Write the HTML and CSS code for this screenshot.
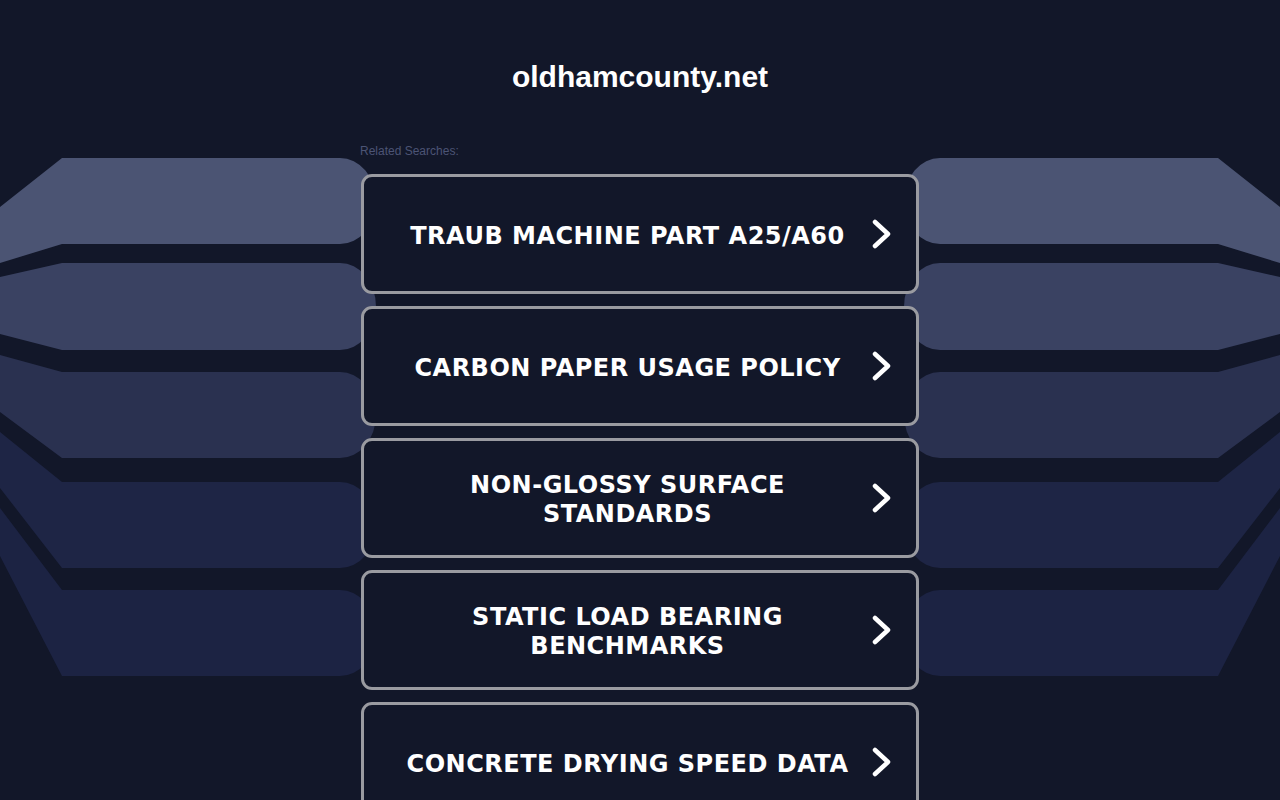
FILE: index.html
```html
<!DOCTYPE html>
<html lang="en">
<head>
<meta charset="utf-8">
<title>oldhamcounty.net</title>
<link rel="stylesheet" href="styles.css">
</head>
<body>
<svg class="backdrop" width="1280" height="800" viewBox="0 0 1280 800" aria-hidden="true">
  <g id="bands">
    <path fill="#4b5473" d="M0,207 L62,158 L340,158 A36,43 0 0 1 340,244 L62,244 L0,263 Z"/>
    <path fill="#3a4262" d="M0,277 L62,263 L340,263 A36,43.5 0 0 1 340,350 L62,350 L0,334 Z"/>
    <path fill="#2a3150" d="M0,355 L62,372 L340,372 A36,43 0 0 1 340,458 L62,458 L0,412 Z"/>
    <path fill="#1e2545" d="M0,432 L62,482 L340,482 A36,43 0 0 1 340,568 L62,568 L0,488 Z"/>
    <path fill="#1c2343" d="M0,508 L62,590 L340,590 A36,43 0 0 1 340,676 L62,676 L0,556 Z"/>
  </g>
  <use href="#bands" transform="matrix(-1 0 0 1 1280 0)"/>
</svg>

<main class="page">
  <h1 class="domain">oldhamcounty.net</h1>
  <section class="searches">
    <p class="searches-label">Related Searches:</p>
    <ul class="search-list">
      <li><a class="search-btn" href="#"><span class="search-text">TRAUB MACHINE PART A25/A60</span><svg class="chev" width="30" height="30" viewBox="0 0 30 30"><polyline points="8,3 21,15 8,27"/></svg></a></li>
      <li><a class="search-btn" href="#"><span class="search-text">CARBON PAPER USAGE POLICY</span><svg class="chev" width="30" height="30" viewBox="0 0 30 30"><polyline points="8,3 21,15 8,27"/></svg></a></li>
      <li><a class="search-btn" href="#"><span class="search-text">NON-GLOSSY SURFACE STANDARDS</span><svg class="chev" width="30" height="30" viewBox="0 0 30 30"><polyline points="8,3 21,15 8,27"/></svg></a></li>
      <li><a class="search-btn" href="#"><span class="search-text">STATIC LOAD BEARING BENCHMARKS</span><svg class="chev" width="30" height="30" viewBox="0 0 30 30"><polyline points="8,3 21,15 8,27"/></svg></a></li>
      <li><a class="search-btn" href="#"><span class="search-text">CONCRETE DRYING SPEED DATA</span><svg class="chev" width="30" height="30" viewBox="0 0 30 30"><polyline points="8,3 21,15 8,27"/></svg></a></li>
    </ul>
  </section>
</main>
</body>
</html>
```

FILE: styles.css
```css
html, body {
  margin: 0;
  padding: 0;
}

body {
  background: #121729;
  height: 800px;
  overflow: hidden;
  position: relative;
  font-family: "Liberation Sans", Arial, sans-serif;
}

.backdrop {
  position: absolute;
  left: 0;
  top: 0;
  z-index: 0;
}

.page {
  position: relative;
  z-index: 1;
  width: 558px;
  margin: 0 auto;
  display: flex;
  flex-direction: column;
}

.domain {
  margin: 0;
  padding-top: 59px;
  font-family: "Liberation Sans", Arial, sans-serif;
  font-weight: 700;
  font-size: 30px;
  line-height: 36px;
  color: #ffffff;
  text-align: center;
}

.searches {
  margin-top: 49px;
}

.searches-label {
  margin: 0 0 0 -1px;
  font-size: 12px;
  line-height: 14px;
  color: #4c5475;
}

.search-list {
  list-style: none;
  margin: 16px 0 0;
  padding: 0;
  display: flex;
  flex-direction: column;
  gap: 12px;
}

.search-btn {
  box-sizing: border-box;
  height: 120px;
  display: flex;
  align-items: center;
  padding: 0 19px 0 24px;
  border: 3px solid #9a9ba1;
  border-radius: 11px;
  background: #121729;
  color: #ffffff;
  text-decoration: none;
}

.search-text {
  flex: 1;
  padding-top: 4px;
  text-align: center;
  font-family: "DejaVu Sans", Verdana, sans-serif;
  font-weight: 700;
  font-size: 24px;
  letter-spacing: 0.5px;
  line-height: 29px;
}

.chev {
  flex: none;
  fill: none;
  stroke: #ffffff;
  stroke-width: 4.5;
  stroke-linecap: round;
  stroke-linejoin: round;
}
```
